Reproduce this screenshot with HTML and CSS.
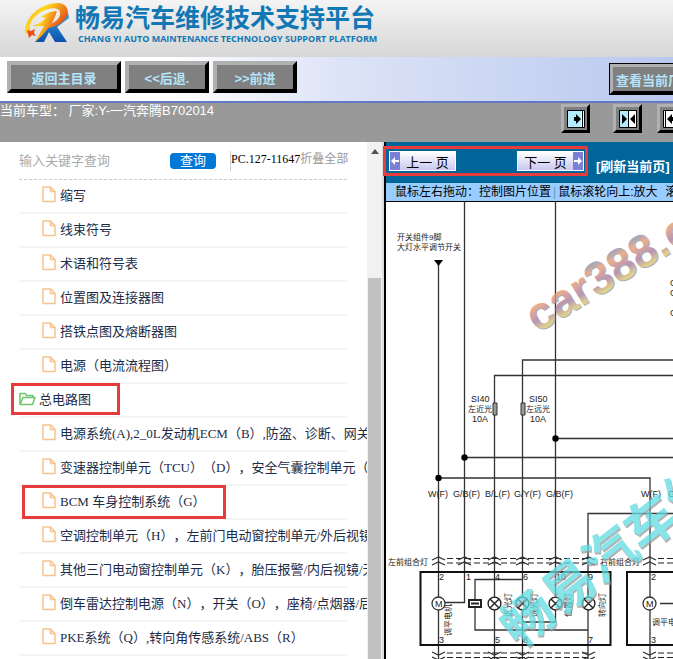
FILE: index.html
```
<!DOCTYPE html>
<html lang="zh-CN">
<head>
  <meta charset="UTF-8">
  <meta name="viewport" content="width=device-width, initial-scale=1.0">
  <title>畅易汽车维修技术支持平台</title>
  <link rel="stylesheet" href="styles.css">
</head>
<body>
  <!-- shared icons -->
  <svg class="sprite" aria-hidden="true">
    <symbol id="file" viewBox="0 0 14 17">
      <path d="M1 1h7.500l4.500 4.500V15.500H1zM8.500 1v4.500H13" fill="none" stroke="#f6c48c" stroke-width="1.500" stroke-linejoin="round"/>
    </symbol>
    <symbol id="bulb" viewBox="-7 -7 14 14">
      <circle r="6" fill="#fff" stroke="#222" stroke-width="1.300"/>
      <path d="M-4-4L4 4M4-4L-4 4" stroke="#222" stroke-width="1.300"/>
    </symbol>
  </svg>

  <header class="header">
    <svg class="logo" viewBox="0 0 48 44" aria-hidden="true">
      <defs>
        <linearGradient id="flame" x1="0" y1="0" x2="1" y2="0.600">
          <stop offset="0" stop-color="#f08a10"/>
          <stop offset="0.400" stop-color="#ffd81e"/>
          <stop offset="1" stop-color="#e2401c"/>
        </linearGradient>
        <linearGradient id="leg" x1="0" y1="0" x2="0" y2="1">
          <stop offset="0" stop-color="#2fa4e4"/>
          <stop offset="1" stop-color="#0d4fae"/>
        </linearGradient>
      </defs>
      <path d="M21 26L11 39H20L25 29L31 39H43L33 24L45 15L44 9L36 20z" fill="url(#leg)"/>
      <path d="M1 30C0 15 16 0 34 0C43 0 47 9 41 16C37 21 31 24 24 25L26 21C32 19 37 14 36 9C34 3 24 5 17 9C9 14 5 20 6 27C5 30 3 31 1 30z" fill="url(#flame)"/>
      <path d="M33 8C31 15 28 20 25 24C21 30 16 35 11 39L20 23H8C15 21 19 18 22 15L17 14C22 10 28 8 33 8z" fill="url(#flame)"/>
      <path d="M3 27l4 1 4-2-1 4 2 3-4-1-3 3-1-4z" fill="#e8501c"/>
    </svg>
    <div class="brand">
      <h1>畅易汽车维修技术支持平台</h1>
      <p>CHANG YI AUTO MAINTENANCE TECHNOLOGY SUPPORT PLATFORM</p>
    </div>
  </header>

  <nav class="toolbar">
    <button type="button" class="btn btn-wide">返回主目录</button>
    <button type="button" class="btn">&lt;&lt;后退.</button>
    <button type="button" class="btn">&gt;&gt;前进</button>
    <div class="toolbar-end">
      <button type="button" class="btn btn-view">查看当前厂家</button>
    </div>
  </nav>

  <div class="status">
    <p>当前车型： 厂家:Y-一汽奔腾B702014</p>
    <div class="layout-buttons">
      <button type="button" class="icon-btn" aria-label="展开左侧">
        <svg viewBox="0 0 18 18"><path d="M.5.5h17v17H.5z" fill="#fff" stroke="#000"/><path d="M1 1h13v16H1z" fill="#b4ecff"/><path d="M15.500 0v18" stroke="#000"/><path d="M7 7h2V4l5 5-5 5v-3H7z"/></svg>
      </button>
      <button type="button" class="icon-btn middle" aria-label="左右平分">
        <svg viewBox="0 0 18 18"><path d="M.5.5h17v17H.5z" fill="#fff" stroke="#000"/><path d="M1 1h8v16H1z" fill="#b4ecff"/><path d="M9.500 0v18" stroke="#000"/><path d="M3 4l5 5-5 5zM16 4l-5 5 5 5z"/></svg>
      </button>
      <button type="button" class="icon-btn" aria-label="展开右侧">
        <svg viewBox="0 0 18 18"><path d="M.5.5h17v17H.5z" fill="#fff" stroke="#000"/><path d="M2.500 0v18" stroke="#000"/><path d="M11 7H9V4L4 9l5 5v-3h2z"/></svg>
      </button>
    </div>
  </div>

  <main class="main">
    <aside class="sidebar">
      <div class="sidebar-content">
        <form class="search">
          <input type="text" class="search-input" placeholder="输入关键字查询" aria-label="关键字">
          <button type="button" class="search-btn">查询</button>
          <span class="code">PC.127-11647<a href="#" class="fold">折叠全部</a></span>
        </form>
        <ul class="tree">
          <li><a href="#"><svg class="file"><use href="#file"/></svg>缩写</a></li>
          <li><a href="#"><svg class="file"><use href="#file"/></svg>线束符号</a></li>
          <li><a href="#"><svg class="file"><use href="#file"/></svg>术语和符号表</a></li>
          <li><a href="#"><svg class="file"><use href="#file"/></svg>位置图及连接器图</a></li>
          <li><a href="#"><svg class="file"><use href="#file"/></svg>搭铁点图及熔断器图</a></li>
          <li><a href="#"><svg class="file"><use href="#file"/></svg>电源（电流流程图）</a></li>
          <li class="group"><a href="#" class="mark mark-group"><svg class="folder" viewBox="0 0 17 14"><path d="M1 12.500V1.500h5l1.500 2H14v2M1 12.500L4 5.500h12l-2.500 7z" fill="none" stroke="#6cc56c" stroke-width="1.500" stroke-linejoin="round"/></svg>总电路图</a></li>
          <li><a href="#"><svg class="file"><use href="#file"/></svg>电源系统(A),2_0L发动机ECM（B）,防盗、诊断、网关</a></li>
          <li><a href="#"><svg class="file"><use href="#file"/></svg>变速器控制单元（TCU）（D），安全气囊控制单元（</a></li>
          <li><a href="#" class="mark mark-item"><svg class="file"><use href="#file"/></svg>BCM 车身控制系统（G）</a></li>
          <li><a href="#"><svg class="file"><use href="#file"/></svg>空调控制单元（H），左前门电动窗控制单元/外后视镜</a></li>
          <li><a href="#"><svg class="file"><use href="#file"/></svg>其他三门电动窗控制单元（K），胎压报警/内后视镜/天</a></li>
          <li><a href="#"><svg class="file"><use href="#file"/></svg>倒车雷达控制电源（N），开关（O），座椅/点烟器/后</a></li>
          <li><a href="#"><svg class="file"><use href="#file"/></svg>PKE系统（Q）,转向角传感系统/ABS（R）</a></li>
        </ul>
      </div>
      <div class="scrollbar">
        <div class="scroll-up"></div>
        <div class="scroll-thumb"></div>
      </div>
    </aside>

    <section class="viewer">
      <div class="pager">
        <div class="pager-buttons">
          <button type="button" class="page-btn"><svg viewBox="0 0 10 18"><path d="M0 0h10v18H0z" fill="#7b7fd6"/><path d="M1 9l4-4v3h4v2H5v3z" fill="#fff"/></svg><span>上一 页</span></button>
          <button type="button" class="page-btn"><span>下一 页</span><svg viewBox="0 0 10 18"><path d="M0 0h10v18H0z" fill="#7b7fd6"/><path d="M9 9L5 5v3H1v2h4v3z" fill="#fff"/></svg></button>
        </div>
        <a href="#" class="refresh">[刷新当前页]</a>
      </div>
      <p class="help">鼠标左右拖动：控制图片位置<span class="bar">|</span>鼠标滚轮向上:放大<span class="next">滚</span></p>

      <div class="canvas">
        <svg class="diagram" viewBox="386 202 400 500">
          <defs>
            <linearGradient id="wm" x1="0" y1="0" x2="0" y2="1">
              <stop offset="0.200" stop-color="#8791b0"/>
              <stop offset="0.350" stop-color="#e79a72"/>
              <stop offset="0.600" stop-color="#a67ba6"/>
              <stop offset="0.850" stop-color="#e8e05c"/>
            </linearGradient>
          </defs>

          <!-- wires -->
          <g class="wire">
            <path d="M438.500 262V659M464.500 201V602.500H445M555.500 201V622H522"/>
            <path d="M494.500 659V375.500H788M522.500 659V360H788"/>
            <path d="M555.500 438.500H788M464.500 457.500H788M438.500 478H650V659"/>
            <path d="M588 659V513.500H788"/>
            <path d="M522 579.500H475V630H588M660 603.500H788"/>
          </g>
          <path d="M434 260h9l-4.500 6z"/>
          <circle cx="438.500" cy="478" r="3.200"/>
          <circle cx="464.500" cy="457.500" r="3.200"/>
          <circle cx="555.500" cy="438.500" r="3.200"/>
          <path class="fuse" d="M493 403h4v12h-4zM521 403h4v12h-4z"/>

          <!-- lamp housings and connectors -->
          <path class="housing" d="M420.500 572h190v73h-190zM788 572H627v73h161"/>
          <path class="dash" d="M447 558.500H588M447 563H588M658 558.500H788M658 563H788M447 653H588M447 657.500H588M658 653H788M658 657.500H788"/>
          <g class="joint">
            <path d="M432 560l6.500-3 6.500 3M432 565l6.500-3 6.500 3"/>
            <path d="M458 560l6.500-3 6.500 3M458 565l6.500-3 6.500 3"/>
            <path d="M488 560l6.500-3 6.500 3M488 565l6.500-3 6.500 3"/>
            <path d="M516 560l6.500-3 6.500 3M516 565l6.500-3 6.500 3"/>
            <path d="M549 560l6.500-3 6.500 3M549 565l6.500-3 6.500 3"/>
            <path d="M582 560l6.500-3 6.500 3M582 565l6.500-3 6.500 3"/>
            <path d="M643 560l6.500-3 6.500 3M643 565l6.500-3 6.500 3"/>
            <path d="M432 652l6.500 3 6.500-3M432 657l6.500 3 6.500-3"/>
            <path d="M488 652l6.500 3 6.500-3M488 657l6.500 3 6.500-3"/>
            <path d="M516 652l6.500 3 6.500-3M516 657l6.500 3 6.500-3"/>
            <path d="M582 652l6.500 3 6.500-3M582 657l6.500 3 6.500-3"/>
            <path d="M643 652l6.500 3 6.500-3M643 657l6.500 3 6.500-3"/>
          </g>
          <path class="relay" d="M469 600h12v7h-12zM471 603.500h8"/>
          <g class="motor">
            <circle cx="438.500" cy="603.500" r="6.500"/>
            <circle cx="649.500" cy="603.500" r="6.500"/>
          </g>
          <use href="#bulb" x="487" y="596" width="15" height="15"/>
          <use href="#bulb" x="515" y="596" width="15" height="15"/>
          <use href="#bulb" x="548" y="596" width="15" height="15"/>
          <use href="#bulb" x="581" y="596" width="15" height="15"/>

          <!-- labels -->
          <g class="label">
            <text x="397" y="240">开关组件9脚</text>
            <text x="397" y="250">大灯水平调节开关</text>
            <text x="468" y="412">左近光</text>
            <text x="526" y="412">左远光</text>
            <text x="388" y="565">左前组合灯</text>
            <text x="600" y="565">右前组合灯</text>
            <text x="652" y="625">调平电</text>
            <text transform="translate(451 636) rotate(-90)">调平电机</text>
            <text transform="translate(511 617) rotate(-90)">近光灯</text>
            <text transform="translate(537 617) rotate(-90)">远光灯</text>
            <text transform="translate(571 617) rotate(-90)">位置灯</text>
            <text transform="translate(605 617) rotate(-90)">转向灯</text>
          </g>
          <g class="label code-label">
            <text x="471" y="402">SI40</text>
            <text x="472" y="422">10A</text>
            <text x="529" y="402">SI50</text>
            <text x="530" y="422">10A</text>
            <text x="670" y="286">G</text>
            <text x="670" y="296">G</text>
            <text x="670" y="316">G</text>
            <text x="428" y="497">W(F)</text>
            <text x="453" y="497">G/B(F)</text>
            <text x="485" y="497">B/L(F)</text>
            <text x="514" y="497">G/Y(F)</text>
            <text x="546" y="497">G/B(F)</text>
            <text x="641" y="497">W(F)</text>
            <text x="668" y="497">G</text>
            <text x="439" y="580">2</text>
            <text x="466" y="580">1</text>
            <text x="495" y="580">4</text>
            <text x="523" y="580">6</text>
            <text x="556" y="580">10</text>
            <text x="588" y="580">9</text>
            <text x="651" y="580">2</text>
            <text x="439" y="643">3</text>
            <text x="495" y="643">5</text>
            <text x="523" y="643">8</text>
            <text x="588" y="643">7</text>
            <text x="651" y="643">3</text>
            <text x="435" y="607">M</text>
            <text x="646" y="607">M</text>
          </g>

          <!-- watermarks -->
          <g class="watermark-url">
            <text class="shade" transform="translate(538 334) rotate(-31)">car388.c</text>
            <text fill="url(#wm)" transform="translate(537 333) rotate(-31)">car388.c</text>
          </g>
          <g class="watermark-name">
            <text class="shade" transform="translate(520 651) rotate(-38)">畅易汽车维</text>
            <text transform="translate(519 649) rotate(-38)">畅易汽车维</text>
          </g>
        </svg>
      </div>
    </section>
  </main>
</body>
</html>
```

FILE: styles.css
```
* {
  box-sizing: border-box;
}

body {
  margin: 0;
  height: 100vh;
  display: flex;
  flex-direction: column;
  overflow: hidden;
  background: #fff;
  font-family: "Liberation Sans", "Noto Sans CJK SC", sans-serif;
  font-size: 13px;
  text-spacing-trim: space-all;
}

h1, p, ul {
  margin: 0;
  padding: 0;
}

a {
  color: inherit;
  text-decoration: none;
}

button {
  font-family: inherit;
  font-size: 13px;
  padding: 0;
  white-space: nowrap;
  cursor: pointer;
}

.sprite {
  position: absolute;
  width: 0;
  height: 0;
}

/* header */
.header {
  flex: none;
  display: flex;
  height: 57px;
  padding: 3px 24px;
  background: linear-gradient(#f4f4f4, #d6d6d6);
}

.logo {
  width: 48px;
  height: 44px;
}

.brand {
  padding-left: 3px;
  color: #1277b5;
  white-space: nowrap;
}

.brand h1 {
  font-size: 25px;
  line-height: 30px;
  font-weight: bold;
}

.brand p {
  padding-left: 3px;
  font-family: "Open Sans", sans-serif;
  font-size: 9px;
  line-height: 12px;
  font-weight: bold;
}

/* toolbar */
.toolbar {
  flex: none;
  display: flex;
  gap: 4px;
  height: 46px;
  padding: 4px 0 0 7px;
  border-bottom: 2px solid #6478c4;
  background: linear-gradient(90deg, #fff 25%, #dde4f7 50%, #b9c8ee);
}

.btn {
  flex: none;
  width: 84px;
  height: 32px;
  border: 4px solid;
  border-color: #b0b0b0 #000 #000 #b0b0b0;
  background: #808080;
  color: #b4e4fa;
  font-weight: bold;
}

.btn-wide {
  width: 114px;
}

.toolbar-end {
  width: 64px;
  margin-left: auto;
  padding-top: 2px;
  overflow: hidden;
}

.btn-view {
  width: 92px;
  outline: 1px solid #000;
  outline-offset: -1px;
}

/* current car */
.status {
  flex: none;
  display: flex;
  justify-content: space-between;
  height: 39px;
  background: #999;
  color: #fff;
  line-height: 16px;
}

.layout-buttons {
  display: flex;
  width: 112px;
  padding-top: 1px;
  overflow: hidden;
}

.icon-btn {
  flex: none;
  display: flex;
  align-items: center;
  justify-content: center;
  width: 29px;
  height: 29px;
  border: 3px solid;
  border-color: #b0b0b0 #000 #000 #b0b0b0;
  background: #808080;
}

.icon-btn svg {
  flex: none;
  width: 18px;
  height: 18px;
}

.middle {
  margin: 0 15px 0 23px;
}

/* panes */
.main {
  flex: 1;
  display: flex;
  min-height: 0;
}

.sidebar {
  flex: none;
  display: flex;
  width: 386px;
  border-right: 2px solid #000;
  background: #ddd;
}

.sidebar-content {
  width: 367px;
  padding: 0 20px 0 19px;
  overflow: hidden;
  background: #fff;
}

.search {
  display: flex;
  align-items: center;
  height: 38px;
  border-bottom: 1px dashed #ccc;
}

.search-input {
  width: 151px;
  padding: 0;
  border: 0;
  font-family: inherit;
  font-size: 13px;
}

.search-input::placeholder {
  color: #aaa;
}

.search-btn {
  flex: none;
  width: 46px;
  height: 16px;
  border: 0;
  border-radius: 4px;
  background: #0078d7;
  color: #fff;
  line-height: 16px;
}

.code {
  flex: none;
  margin-left: 14px;
  padding-bottom: 4px;
  border-left: 1px solid #ccc;
  font-family: "Liberation Serif", "Noto Sans CJK SC", serif;
  font-size: 12px;
  line-height: 16px;
  white-space: nowrap;
}

.fold {
  color: #999;
}

.tree {
  list-style: none;
  font-family: "Liberation Serif", "Noto Sans CJK SC", serif;
  color: #1c2c48;
}

.tree li {
  display: flex;
  align-items: center;
  height: 34px;
  padding: 0 0 3px 23px;
  border-bottom: 2px solid #f5f5f5;
  white-space: nowrap;
}

.tree .group {
  padding-left: 0;
}

.tree a {
  display: flex;
  align-items: center;
  white-space: pre;
}

.file {
  flex: none;
  width: 14px;
  height: 17px;
  margin-right: 4px;
}

.folder {
  flex: none;
  width: 17px;
  height: 14px;
  margin-right: 3px;
}

/* red frames over the tree and pager */
.mark,
.pager-buttons {
  position: relative;
}

.mark::after,
.pager-buttons::after {
  content: "";
  position: absolute;
  border: 3px solid #e83c3c;
  pointer-events: none;
}

.mark-group::after {
  inset: -6px -29px -7px -8px;
}

.mark-item::after {
  inset: -6px -20px -9px -20px;
}

.pager-buttons::after {
  inset: -5px -4px -5px -6px;
}

.scrollbar {
  width: 15px;
  padding: 7px 1px 0;
  overflow: hidden;
  background: #f1f1f1;
}

.scroll-up {
  width: 0;
  margin: 0 auto;
  border: 4px solid transparent;
  border-top: 0;
  border-bottom: 5px solid #505050;
}

.scroll-thumb {
  height: 100%;
  margin-top: 124px;
  background: #c1c1c1;
}

/* viewer */
.viewer {
  flex: 1;
  display: flex;
  flex-direction: column;
  min-width: 0;
}

.pager {
  flex: none;
  display: flex;
  align-items: flex-start;
  height: 41px;
  padding: 9px 0 0 3px;
  background: #069;
}

.pager-buttons {
  flex: none;
  display: flex;
  justify-content: space-between;
  width: 195px;
}

.page-btn {
  display: flex;
  align-items: center;
  width: 67px;
  height: 20px;
  border: 1px solid #fff;
  background: linear-gradient(#fff, #c8c8f0);
  color: #000;
}

.page-btn svg {
  flex: none;
  width: 10px;
  height: 18px;
}

.page-btn span {
  flex: 1;
}

.refresh {
  flex: none;
  margin-left: 12px;
  padding-top: 6px;
  color: #fff;
  font-weight: bold;
  line-height: 20px;
}

.help {
  flex: none;
  height: 19px;
  padding-left: 9px;
  border-bottom: 1px solid #000;
  background: #9cf;
  font-size: 12px;
  line-height: 18px;
  white-space: nowrap;
}

.bar {
  margin: 0 2px;
  color: #69a;
}

.next {
  margin-left: 8px;
}

.canvas {
  flex: 1;
  min-height: 0;
  overflow: hidden;
}

.diagram {
  display: block;
  width: 400px;
  height: 500px;
}

.wire,
.joint,
.motor {
  fill: none;
  stroke: #333;
  stroke-width: 1.3px;
}

.motor {
  fill: #fff;
}

.fuse {
  fill: #999;
  stroke: #333;
}

.housing {
  fill: none;
  stroke: #111;
  stroke-width: 2px;
}

.dash {
  fill: none;
  stroke: #222;
  stroke-dasharray: 6 3;
}

.relay {
  fill: #fff;
  stroke: #222;
  stroke-width: 2px;
}

.label {
  font-size: 8px;
  fill: #222;
}

.code-label {
  font-size: 9px;
}

.watermark-url {
  font-size: 46px;
  font-weight: bold;
  opacity: 0.8;
}

.watermark-name {
  font-size: 52px;
  font-weight: bold;
  fill: #5fdce2;
  opacity: 0.75;
}

.shade {
  fill: #999;
}
```
